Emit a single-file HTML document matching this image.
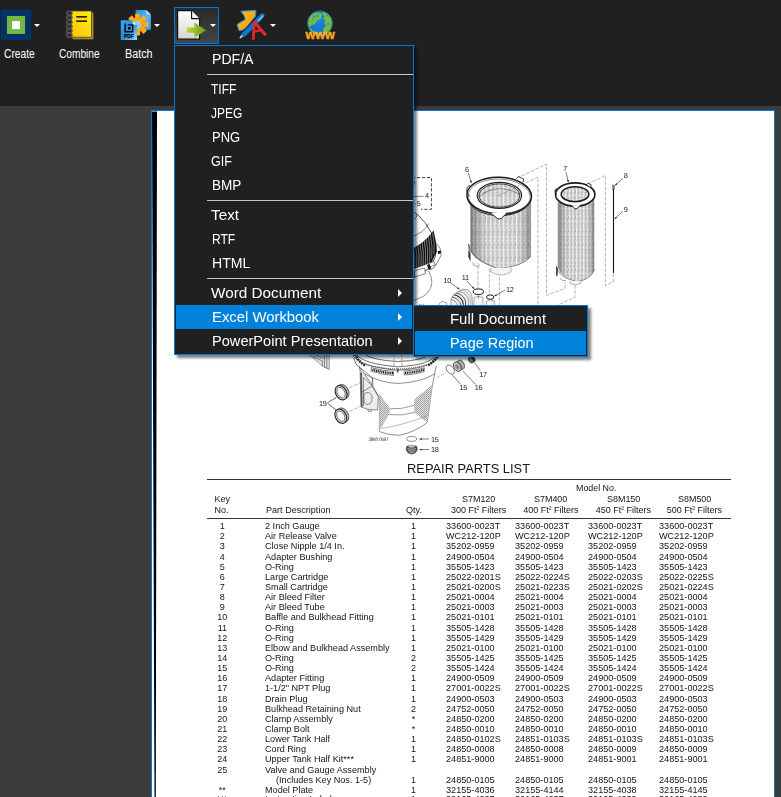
<!DOCTYPE html>
<html><head><meta charset="utf-8"><title>ui</title><style>
html,body{margin:0;padding:0;}
body{width:781px;height:797px;overflow:hidden;background:#3c3c3c;font-family:"Liberation Sans",sans-serif;position:relative;}
.abs{position:absolute;}
#toolbar{position:absolute;left:0;top:0;width:781px;height:106px;background:#202020;}
.tlabel{position:absolute;top:47px;font-size:12px;line-height:14px;color:#fff;white-space:nowrap;transform-origin:0 0;}
.dd{position:absolute;width:0;height:0;border-left:3px solid transparent;border-right:3px solid transparent;border-top:3.5px solid #fff;}
#btn4{position:absolute;left:174px;top:7px;width:43px;height:35px;border:1px solid #0078d7;background:linear-gradient(#2a2a2a,#454545);}
#page{position:absolute;left:151px;top:110px;width:622px;height:700px;border:1px solid #0078d7;background:#fff;overflow:hidden;}
#pg{position:absolute;left:-152px;top:-111px;width:781px;height:797px;will-change:transform;}
#menu{position:absolute;left:174px;top:45px;width:238px;height:308px;border:1px solid #0078d7;background:#202020;box-shadow:3px 3px 2.5px rgba(0,0,0,.5);}
#sub{position:absolute;left:413px;top:305px;width:173px;height:50px;border:1px solid #0078d7;background:#202020;box-shadow:3px 3px 2.5px rgba(0,0,0,.5);}
.mi{position:absolute;left:1px;width:236px;height:24px;color:#fff;font-size:15px;line-height:23px;white-space:nowrap;}
.mi span{position:absolute;left:36px;top:0;transform-origin:0 50%;display:inline-block;}
.mi.hl{background:#0082da;}
.sep{position:absolute;left:32px;width:206px;height:1px;background:#c6c6c6;}
.arr{position:absolute;left:222px;top:8px;width:0;height:0;border-top:4px solid transparent;border-bottom:4px solid transparent;border-left:4.5px solid #fff;}
.t{position:absolute;font-size:9px;line-height:10px;color:#151515;white-space:nowrap;}
.tc{text-align:center;}
</style></head><body>
<div id="toolbar">
<div class="abs" style="left:1px;top:10px;width:30px;height:30px;background:#003366"></div>
<div class="abs" style="left:7px;top:16px;width:18px;height:18px;background:#76b83f"></div>
<div class="abs" style="left:12px;top:21px;width:8px;height:8px;background:#fff"></div>
<div class="dd" style="left:34px;top:24px"></div>
<div class="dd" style="left:154px;top:24px"></div>
<div class="dd" style="left:270px;top:24px"></div>
<div class="tlabel" style="left:3.7px;transform:scaleX(0.852)">Create</div>
<div class="tlabel" style="left:58.8px;transform:scaleX(0.845)">Combine</div>
<div class="tlabel" style="left:125.2px;transform:scaleX(0.899)">Batch</div>
<div id="btn4"></div>
<div class="dd" style="left:209.5px;top:24px"></div>
<svg class="abs" style="left:0;top:0" width="400" height="46" viewBox="0 0 400 46">
<defs>
<linearGradient id="gy" x1="1" y1="0" x2="0" y2="1"><stop offset="0" stop-color="#fff200"/><stop offset="1" stop-color="#fdc20e"/></linearGradient>
<linearGradient id="gb" x1="0" y1="0" x2="1" y2="1"><stop offset="0" stop-color="#1e8fe6"/><stop offset=".6" stop-color="#5bb8f5"/><stop offset="1" stop-color="#2f9be8"/></linearGradient>
<linearGradient id="gb2" x1="0" y1="0" x2="1" y2="1"><stop offset="0" stop-color="#3aa5ee"/><stop offset=".5" stop-color="#2b8fdd"/><stop offset="1" stop-color="#9fd8fb"/></linearGradient>
<linearGradient id="go" x1="0" y1="0" x2="1" y2="1"><stop offset="0" stop-color="#ffc20e"/><stop offset="1" stop-color="#f7941d"/></linearGradient>
<linearGradient id="gd" x1="0" y1="0" x2="0" y2="1"><stop offset="0" stop-color="#fff"/><stop offset="1" stop-color="#d6d6d6"/></linearGradient>
<linearGradient id="gg" x1="0" y1="0" x2="1" y2="0"><stop offset="0" stop-color="#c1d82f"/><stop offset="1" stop-color="#5e9a2e"/></linearGradient>
<radialGradient id="gl" cx=".4" cy=".35" r=".7"><stop offset="0" stop-color="#1b8be0"/><stop offset="1" stop-color="#0a6ac8"/></radialGradient>
<linearGradient id="gw" x1="0" y1="0" x2="0" y2="1"><stop offset="0" stop-color="#ffd21f"/><stop offset="1" stop-color="#f7941d"/></linearGradient>
</defs>
<!-- notebook -->
<g>
 <path d="M73,12.2 H92.6 L93.4,13 V38.6 L92.6,39.2 H73.4 L71.2,37.4 V12.6 Z" fill="#c9961a" stroke="#4a4a4a" stroke-width=".8"/>
 <rect x="71.3" y="11" width="20.2" height="26.2" fill="url(#gy)" stroke="#4a4a4a" stroke-width=".9"/>
 <rect x="76.2" y="16.1" width="10.8" height="1.5" fill="#111"/><rect x="76.2" y="20.4" width="10.8" height="1.5" fill="#111"/>
 <g fill="#2b2b2b" stroke="#585858" stroke-width="1.2">
  <ellipse cx="69.3" cy="13.2" rx="2.8" ry="2"/><ellipse cx="69.3" cy="17.6" rx="2.8" ry="2"/><ellipse cx="69.3" cy="22" rx="2.8" ry="2"/><ellipse cx="69.3" cy="26.4" rx="2.8" ry="2"/><ellipse cx="69.3" cy="30.8" rx="2.8" ry="2"/><ellipse cx="69.3" cy="35.2" rx="2.8" ry="2"/>
 </g>
</g>
<!-- batch -->
<g>
 <path d="M135.6,10 H146.4 L150.9,14.6 V29.8 H135.6 Z" fill="url(#gb)"/>
 <path d="M146.4,10 L150.9,14.6 H146.4 Z" fill="#a7dcfb"/>
 <g fill="url(#go)">
  <circle cx="137.6" cy="24.6" r="7.3"/>
  <rect x="135.2" y="13.8" width="4.8" height="6" transform="rotate(0 137.6 24.6)"/>
  <rect x="135.2" y="13.8" width="4.8" height="6" transform="rotate(45 137.6 24.6)"/>
  <rect x="135.2" y="13.8" width="4.8" height="6" transform="rotate(90 137.6 24.6)"/>
  <rect x="135.2" y="13.8" width="4.8" height="6" transform="rotate(135 137.6 24.6)"/>
  <rect x="135.2" y="13.8" width="4.8" height="6" transform="rotate(180 137.6 24.6)"/>
  <rect x="135.2" y="13.8" width="4.8" height="6" transform="rotate(-45 137.6 24.6)"/>
  <rect x="135.2" y="13.8" width="4.8" height="6" transform="rotate(-90 137.6 24.6)"/>
  <rect x="135.2" y="13.8" width="4.8" height="6" transform="rotate(-135 137.6 24.6)"/>
 </g>
 <circle cx="137.4" cy="24.8" r="3.6" fill="#8fd0f8"/>
 <path d="M120.8,20.2 H132.6 L137.1,24.8 V40 H120.8 Z" fill="url(#gb2)"/>
 <path d="M132.6,20.2 L137.1,24.8 H132.6 Z" fill="#bfe6fc"/>
 <path d="M124.4,23.6 H126 V31 H132 V25.6 H127.6 V24.2 H133.4 V32.4 H124.4 Z" fill="#0b0b0b"/>
 <rect x="128" y="27" width="2.6" height="2.6" fill="#0b0b0b"/>
 <text x="124" y="38.4" font-family="Liberation Sans, sans-serif" font-weight="bold" font-size="5.8" fill="#000" stroke="#000" stroke-width=".25" textLength="9.8" lengthAdjust="spacingAndGlyphs">PDF</text>
</g>
<!-- export doc + arrow -->
<g>
 <path d="M177.6,10.6 H191.6 L199.6,18.6 V39 H177.6 Z" fill="url(#gd)" stroke="#0a0a0a" stroke-width="1.2" stroke-linejoin="round"/>
 <path d="M191.6,10.6 V18.6 H199.6" fill="#f4f4f4" stroke="#0a0a0a" stroke-width="1.1" stroke-linejoin="round"/>
 <path d="M186.8,27.6 H194.4 V22.6 L206.2,30.2 L194.4,37.8 V32.8 H186.8 Z" fill="url(#gg)"/>
</g>
<!-- star/pen/A -->
<g>
 <path d="M240.9,11.3 L255.9,10.3 L255.6,16 L246,27.5 L242.8,30 L239,30.700 L237,24.400 L245.4,19.300 L243.7,15 Z" fill="url(#go)" stroke="#1b8fe3" stroke-width="1" stroke-linejoin="round"/>
 <path d="M262.2,15.6 L244.400,34.200" stroke="#0e76d0" stroke-width="4.6" stroke-linecap="round"/>
 <path d="M243.200,31.400 L246.400,34.800 L240.300,38.600 L239.300,37.600 Z" fill="#0e76d0"/>
 <path d="M241.600,35 L243,36.600 L240.200,38.500 L239.500,37.700 Z" fill="#b7dcf7"/>
 <path d="M258.400,20.600 L263,15.800" stroke="#a9d6f7" stroke-width="1.200" stroke-linecap="round"/>
 <path d="M251.900,39.900 L252.700,21.800 L255.600,21 L267.200,34.400 L264.600,36.200 L260.400,31.400 L255,32.800 L254.800,39.600 Z M255.200,30.300 L258.800,29.400 L255.400,25.400 Z" fill="#e0262e" fill-rule="evenodd"/>
</g>
<!-- globe + www -->
<g>
<g transform="translate(0 .7)">
 <circle cx="320" cy="22.600" r="12.500" fill="url(#gl)"/>
 <clipPath id="gc"><circle cx="320" cy="22.600" r="12.300"/></clipPath>
 <g clip-path="url(#gc)" fill="#74b943">
  <path d="M306,14 L313,11.500 L321.500,12.200 L321.800,15 L320.600,18.500 L317.600,19.200 L316.400,21.400 L314.500,23.400 L311.800,24.200 L310.600,26 L307,26 Z"/>
  <path d="M322.600,11 L328,12 L331.500,15 L334,22 L332.500,30 L329,34.500 L324,35 L322.800,31 L323.400,27.500 L326,25 L324.200,22.500 L325.200,19.800 L323.200,18 L324.600,15.600 L322.400,14 Z"/>
  <path d="M307,26.800 L310.800,27.800 L313.200,30.400 L316.800,31.800 L320.800,33.400 L321.600,36 L312,35.500 L307,31 Z"/>
 </g>
 <g clip-path="url(#gc)" fill="#1b84dc"><rect x="313.200" y="14.800" width="1.800" height="1.500"/><rect x="316.800" y="13.600" width="1.400" height="2.400"/><rect x="326.400" y="14" width="1.600" height="1.400"/><rect x="327" y="22.800" width="2.600" height="1"/><rect x="312" y="17.600" width="1.600" height="1"/></g>
 <circle cx="320" cy="22.600" r="12.400" fill="none" stroke="#0b66c2" stroke-width=".7"/>
</g>
 <text x="305.600" y="38.900" font-family="Liberation Sans, sans-serif" font-weight="bold" font-size="12.600" fill="url(#gw)" stroke="#f7a71b" stroke-width=".4" textLength="29.200" lengthAdjust="spacingAndGlyphs">www</text>
</g>
</svg>

</div>
<div id="page"><div id="pg">
<svg class="abs" style="left:0;top:0" width="781" height="797" viewBox="0 0 781 797" font-family="Liberation Sans, sans-serif" font-size="7.3" fill="#222" text-rendering="geometricPrecision" letter-spacing="-0.35">
<defs>
<pattern id="pl" width="4.3" height="13" patternUnits="userSpaceOnUse"><rect width="4.3" height="13" fill="#d0d0d0"/><rect x="0.00" y="0" width="0.77" height="1.05" fill="#f9f9f9"/><rect x="0.00" y="1" width="0.77" height="1.05" fill="#f4f4f4"/><rect x="0.00" y="2" width="0.77" height="1.05" fill="#fbfbfb"/><rect x="0.00" y="3" width="0.77" height="1.05" fill="#f5f5f5"/><rect x="0.00" y="4" width="0.77" height="1.05" fill="#fcfcfc"/><rect x="0.00" y="5" width="0.77" height="1.05" fill="#fbfbfb"/><rect x="0.00" y="6" width="0.77" height="1.05" fill="#fdfdfd"/><rect x="0.00" y="7" width="0.77" height="1.05" fill="#fbfbfb"/><rect x="0.00" y="8" width="0.77" height="1.05" fill="#fafafa"/><rect x="0.00" y="9" width="0.77" height="1.05" fill="#f8f8f8"/><rect x="0.00" y="10" width="0.77" height="1.05" fill="#f0f0f0"/><rect x="0.00" y="11" width="0.77" height="1.05" fill="#fdfdfd"/><rect x="0.00" y="12" width="0.77" height="1.05" fill="#f7f7f7"/><rect x="0.72" y="0" width="0.77" height="1.05" fill="#e5e5e5"/><rect x="0.72" y="1" width="0.77" height="1.05" fill="#f2f2f2"/><rect x="0.72" y="2" width="0.77" height="1.05" fill="#dfdfdf"/><rect x="0.72" y="3" width="0.77" height="1.05" fill="#e3e3e3"/><rect x="0.72" y="4" width="0.77" height="1.05" fill="#e1e1e1"/><rect x="0.72" y="5" width="0.77" height="1.05" fill="#e9e9e9"/><rect x="0.72" y="6" width="0.77" height="1.05" fill="#ededed"/><rect x="0.72" y="7" width="0.77" height="1.05" fill="#e5e5e5"/><rect x="0.72" y="8" width="0.77" height="1.05" fill="#eaeaea"/><rect x="0.72" y="9" width="0.77" height="1.05" fill="#efefef"/><rect x="0.72" y="10" width="0.77" height="1.05" fill="#e1e1e1"/><rect x="0.72" y="11" width="0.77" height="1.05" fill="#f0f0f0"/><rect x="0.72" y="12" width="0.77" height="1.05" fill="#e5e5e5"/><rect x="1.43" y="0" width="0.77" height="1.05" fill="#a9a9a9"/><rect x="1.43" y="1" width="0.77" height="1.05" fill="#c3c3c3"/><rect x="1.43" y="2" width="0.77" height="1.05" fill="#dcdcdc"/><rect x="1.43" y="3" width="0.77" height="1.05" fill="#cbcbcb"/><rect x="1.43" y="4" width="0.77" height="1.05" fill="#bfbfbf"/><rect x="1.43" y="5" width="0.77" height="1.05" fill="#d9d9d9"/><rect x="1.43" y="6" width="0.77" height="1.05" fill="#bcbcbc"/><rect x="1.43" y="7" width="0.77" height="1.05" fill="#b1b1b1"/><rect x="1.43" y="8" width="0.77" height="1.05" fill="#b9b9b9"/><rect x="1.43" y="9" width="0.77" height="1.05" fill="#e0e0e0"/><rect x="1.43" y="10" width="0.77" height="1.05" fill="#b8b8b8"/><rect x="1.43" y="11" width="0.77" height="1.05" fill="#b8b8b8"/><rect x="1.43" y="12" width="0.77" height="1.05" fill="#a8a8a8"/><rect x="2.15" y="0" width="0.77" height="1.05" fill="#a8a8a8"/><rect x="2.15" y="1" width="0.77" height="1.05" fill="#c2c2c2"/><rect x="2.15" y="2" width="0.77" height="1.05" fill="#c3c3c3"/><rect x="2.15" y="3" width="0.77" height="1.05" fill="#bdbdbd"/><rect x="2.15" y="4" width="0.77" height="1.05" fill="#bdbdbd"/><rect x="2.15" y="5" width="0.77" height="1.05" fill="#cdcdcd"/><rect x="2.15" y="6" width="0.77" height="1.05" fill="#d0d0d0"/><rect x="2.15" y="7" width="0.77" height="1.05" fill="#c1c1c1"/><rect x="2.15" y="8" width="0.77" height="1.05" fill="#ededed"/><rect x="2.15" y="9" width="0.77" height="1.05" fill="#c2c2c2"/><rect x="2.15" y="10" width="0.77" height="1.05" fill="#bfbfbf"/><rect x="2.15" y="11" width="0.77" height="1.05" fill="#c1c1c1"/><rect x="2.15" y="12" width="0.77" height="1.05" fill="#d9d9d9"/><rect x="2.87" y="0" width="0.77" height="1.05" fill="#cecece"/><rect x="2.87" y="1" width="0.77" height="1.05" fill="#aaaaaa"/><rect x="2.87" y="2" width="0.77" height="1.05" fill="#d6d6d6"/><rect x="2.87" y="3" width="0.77" height="1.05" fill="#dddddd"/><rect x="2.87" y="4" width="0.77" height="1.05" fill="#bdbdbd"/><rect x="2.87" y="5" width="0.77" height="1.05" fill="#bababa"/><rect x="2.87" y="6" width="0.77" height="1.05" fill="#c9c9c9"/><rect x="2.87" y="7" width="0.77" height="1.05" fill="#b0b0b0"/><rect x="2.87" y="8" width="0.77" height="1.05" fill="#d2d2d2"/><rect x="2.87" y="9" width="0.77" height="1.05" fill="#cecece"/><rect x="2.87" y="10" width="0.77" height="1.05" fill="#a8a8a8"/><rect x="2.87" y="11" width="0.77" height="1.05" fill="#d3d3d3"/><rect x="2.87" y="12" width="0.77" height="1.05" fill="#b0b0b0"/><rect x="3.58" y="0" width="0.77" height="1.05" fill="#cfcfcf"/><rect x="3.58" y="1" width="0.77" height="1.05" fill="#d5d5d5"/><rect x="3.58" y="2" width="0.77" height="1.05" fill="#cfcfcf"/><rect x="3.58" y="3" width="0.77" height="1.05" fill="#e5e5e5"/><rect x="3.58" y="4" width="0.77" height="1.05" fill="#d0d0d0"/><rect x="3.58" y="5" width="0.77" height="1.05" fill="#bfbfbf"/><rect x="3.58" y="6" width="0.77" height="1.05" fill="#e5e5e5"/><rect x="3.58" y="7" width="0.77" height="1.05" fill="#e4e4e4"/><rect x="3.58" y="8" width="0.77" height="1.05" fill="#bebebe"/><rect x="3.58" y="9" width="0.77" height="1.05" fill="#afafaf"/><rect x="3.58" y="10" width="0.77" height="1.05" fill="#c8c8c8"/><rect x="3.58" y="11" width="0.77" height="1.05" fill="#aaaaaa"/><rect x="3.58" y="12" width="0.77" height="1.05" fill="#d5d5d5"/></pattern>
<pattern id="pl2" width="3.6" height="13" patternUnits="userSpaceOnUse"><rect width="3.6" height="13" fill="#d0d0d0"/><rect x="0.00" y="0" width="0.77" height="1.05" fill="#fdfdfd"/><rect x="0.00" y="1" width="0.77" height="1.05" fill="#f6f6f6"/><rect x="0.00" y="2" width="0.77" height="1.05" fill="#f0f0f0"/><rect x="0.00" y="3" width="0.77" height="1.05" fill="#f8f8f8"/><rect x="0.00" y="4" width="0.77" height="1.05" fill="#fcfcfc"/><rect x="0.00" y="5" width="0.77" height="1.05" fill="#f6f6f6"/><rect x="0.00" y="6" width="0.77" height="1.05" fill="#f5f5f5"/><rect x="0.00" y="7" width="0.77" height="1.05" fill="#f6f6f6"/><rect x="0.00" y="8" width="0.77" height="1.05" fill="#f9f9f9"/><rect x="0.00" y="9" width="0.77" height="1.05" fill="#fdfdfd"/><rect x="0.00" y="10" width="0.77" height="1.05" fill="#f0f0f0"/><rect x="0.00" y="11" width="0.77" height="1.05" fill="#f7f7f7"/><rect x="0.00" y="12" width="0.77" height="1.05" fill="#f0f0f0"/><rect x="0.72" y="0" width="0.77" height="1.05" fill="#f4f4f4"/><rect x="0.72" y="1" width="0.77" height="1.05" fill="#e3e3e3"/><rect x="0.72" y="2" width="0.77" height="1.05" fill="#f1f1f1"/><rect x="0.72" y="3" width="0.77" height="1.05" fill="#e4e4e4"/><rect x="0.72" y="4" width="0.77" height="1.05" fill="#e1e1e1"/><rect x="0.72" y="5" width="0.77" height="1.05" fill="#e5e5e5"/><rect x="0.72" y="6" width="0.77" height="1.05" fill="#ececec"/><rect x="0.72" y="7" width="0.77" height="1.05" fill="#e9e9e9"/><rect x="0.72" y="8" width="0.77" height="1.05" fill="#eeeeee"/><rect x="0.72" y="9" width="0.77" height="1.05" fill="#e9e9e9"/><rect x="0.72" y="10" width="0.77" height="1.05" fill="#eeeeee"/><rect x="0.72" y="11" width="0.77" height="1.05" fill="#e6e6e6"/><rect x="0.72" y="12" width="0.77" height="1.05" fill="#ececec"/><rect x="1.44" y="0" width="0.77" height="1.05" fill="#adadad"/><rect x="1.44" y="1" width="0.77" height="1.05" fill="#cfcfcf"/><rect x="1.44" y="2" width="0.77" height="1.05" fill="#c5c5c5"/><rect x="1.44" y="3" width="0.77" height="1.05" fill="#a4a4a4"/><rect x="1.44" y="4" width="0.77" height="1.05" fill="#d7d7d7"/><rect x="1.44" y="5" width="0.77" height="1.05" fill="#ababab"/><rect x="1.44" y="6" width="0.77" height="1.05" fill="#bababa"/><rect x="1.44" y="7" width="0.77" height="1.05" fill="#cbcbcb"/><rect x="1.44" y="8" width="0.77" height="1.05" fill="#e1e1e1"/><rect x="1.44" y="9" width="0.77" height="1.05" fill="#cecece"/><rect x="1.44" y="10" width="0.77" height="1.05" fill="#b2b2b2"/><rect x="1.44" y="11" width="0.77" height="1.05" fill="#cbcbcb"/><rect x="1.44" y="12" width="0.77" height="1.05" fill="#c3c3c3"/><rect x="2.16" y="0" width="0.77" height="1.05" fill="#e5e5e5"/><rect x="2.16" y="1" width="0.77" height="1.05" fill="#ababab"/><rect x="2.16" y="2" width="0.77" height="1.05" fill="#c7c7c7"/><rect x="2.16" y="3" width="0.77" height="1.05" fill="#c8c8c8"/><rect x="2.16" y="4" width="0.77" height="1.05" fill="#c7c7c7"/><rect x="2.16" y="5" width="0.77" height="1.05" fill="#b6b6b6"/><rect x="2.16" y="6" width="0.77" height="1.05" fill="#aaaaaa"/><rect x="2.16" y="7" width="0.77" height="1.05" fill="#b3b3b3"/><rect x="2.16" y="8" width="0.77" height="1.05" fill="#c7c7c7"/><rect x="2.16" y="9" width="0.77" height="1.05" fill="#dddddd"/><rect x="2.16" y="10" width="0.77" height="1.05" fill="#b4b4b4"/><rect x="2.16" y="11" width="0.77" height="1.05" fill="#a6a6a6"/><rect x="2.16" y="12" width="0.77" height="1.05" fill="#aaaaaa"/><rect x="2.88" y="0" width="0.77" height="1.05" fill="#e4e4e4"/><rect x="2.88" y="1" width="0.77" height="1.05" fill="#d3d3d3"/><rect x="2.88" y="2" width="0.77" height="1.05" fill="#a4a4a4"/><rect x="2.88" y="3" width="0.77" height="1.05" fill="#bebebe"/><rect x="2.88" y="4" width="0.77" height="1.05" fill="#cccccc"/><rect x="2.88" y="5" width="0.77" height="1.05" fill="#c0c0c0"/><rect x="2.88" y="6" width="0.77" height="1.05" fill="#dadada"/><rect x="2.88" y="7" width="0.77" height="1.05" fill="#d5d5d5"/><rect x="2.88" y="8" width="0.77" height="1.05" fill="#b2b2b2"/><rect x="2.88" y="9" width="0.77" height="1.05" fill="#a7a7a7"/><rect x="2.88" y="10" width="0.77" height="1.05" fill="#a4a4a4"/><rect x="2.88" y="11" width="0.77" height="1.05" fill="#dfdfdf"/><rect x="2.88" y="12" width="0.77" height="1.05" fill="#cacaca"/></pattern>
<pattern id="st" width="2" height="2" patternUnits="userSpaceOnUse"><rect width="2" height="2" fill="#dedede"/><rect width="1" height="1" fill="#9c9c9c"/><rect x="1" y="1" width="1" height="1" fill="#adadad"/></pattern>
<linearGradient id="edge" x1="0" x2="1" y1="0" y2="0"><stop offset="0" stop-color="#000" stop-opacity=".4"/><stop offset=".1" stop-color="#000" stop-opacity=".22"/><stop offset=".22" stop-color="#000" stop-opacity=".04"/><stop offset=".35" stop-color="#000" stop-opacity="0"/><stop offset=".78" stop-color="#000" stop-opacity="0"/><stop offset=".9" stop-color="#000" stop-opacity=".14"/><stop offset="1" stop-color="#000" stop-opacity=".36"/></linearGradient>
<marker id="ah" viewBox="0 0 6 6" refX="5.5" refY="3" markerWidth="4" markerHeight="4" orient="auto"><path d="M0,0.6 L6,3 L0,5.4 z" fill="#222"/></marker>
</defs>
<!-- left black scan stripe -->
<polygon points="152,111.5 157,111.5 155.8,797 154.5,797" fill="#000"/>
<g stroke="#6a6a6a" stroke-width=".5" fill="none" stroke-dasharray="3.6 1.5">
 <!-- dashed explode lines -->
 <path d="M517,178 L546.5,164 V295.3 L565.1,288.3 V282"/>
 <path d="M498,196 L538,177 V306"/>
 <path d="M588,184 L605.4,175.5 V285.7 L613.4,281.5 V273"/>
 <path d="M575,285 V297.2 L558,305"/>
 <path d="M477.9,266 V288"/><path d="M489.4,269 V294"/><path d="M499.4,277 V306"/>
</g>
<!-- dashed box 2/4/5 -->
<path d="M412,177.6 H431.4 V209.3 H421" fill="none" stroke="#222" stroke-width=".9" stroke-dasharray="3.2 1.8"/>
<text x="411.600" y="185.500">2</text><text x="425" y="198">4</text><text x="416.700" y="206">5</text>
<path d="M414,196.4 H423.5 M414.3,203.8 H415.6" stroke="#333" stroke-width=".6"/>
<!-- ===== large cartridge 6 ===== -->
<g>
 <path d="M470.4,198 L470.4,250 Q474,262 497,268.3 Q520,266 530.9,256.5 L530.9,198 Z" fill="url(#pl)"/>
 <path d="M470.4,198 L470.4,250 Q474,262 497,268.3 Q520,266 530.9,256.5 L530.9,198 Z" fill="url(#edge)"/>
 <path d="M468.6,244 Q469,258 497,268.6 Q522,267 530.9,256.5" fill="none" stroke="#555" stroke-width=".8"/>
 <path d="M468.3,250 L468.300,257 L470.500,261.500 L470.500,254 Z" fill="#333"/><path d="M468.600,244 Q468.500,250 470.400,253" fill="none" stroke="#444" stroke-width=".7"/>
 <path d="M491,268 V272 Q501,278 511,272 V267.5" fill="#f4f4f4" stroke="#888" stroke-width=".6"/>
 <path d="M473,262 v3 q3,2 6,1.5 v-3" fill="#eee" stroke="#777" stroke-width=".5"/>
 <!-- top ring -->
 <path d="M467,197 Q470,213 499,216.200 Q528,214 531.500,197.500" fill="#fff" stroke="#222" stroke-width="1"/><ellipse cx="499.2" cy="195.7" rx="32.3" ry="18.4" fill="#fff" stroke="#1a1a1a" stroke-width="1.500" transform="rotate(2 499 196)"/>
 <ellipse cx="499.2" cy="196.3" rx="31" ry="17.2" fill="none" stroke="#444" stroke-width=".6" transform="rotate(2 499 196)"/>
 <path d="M470,185.5 q-4,1 -3,6 q.5,3.5 3,5" fill="none" stroke="#222" stroke-width=".9"/>
 <path d="M516.5,178.5 l1.8,-2 l5.6,2.8 l-1,3" fill="#fff" stroke="#222" stroke-width=".9"/>
 <path d="M490.5,213 l7,5.6 q2,.8 4,-.4 l5.5,-5.4" fill="#fff" stroke="#222" stroke-width="1"/>
 <ellipse cx="499.4" cy="195.4" rx="22.2" ry="13" fill="url(#pl)" stroke="#222" stroke-width="1.1"/>
 <ellipse cx="499.4" cy="195.6" rx="20.3" ry="11.6" fill="none" stroke="#222" stroke-width=".8"/>
 <path d="M478,197 q21,-16 43,-2" fill="none" stroke="#444" stroke-width=".5"/>
</g>
<g stroke="#6a6a6a" stroke-width=".5" fill="none" stroke-dasharray="3.6 1.5"><path d="M498,196 L521,185"/><path d="M483,193 L497,186.5"/></g>
<text x="465" y="172">6</text><path d="M468.2,172.6 L471.3,182.8" stroke="#222" stroke-width=".6" marker-end="url(#ah)"/>
<!-- ===== small cartridge 7 ===== -->
<g>
 <path d="M557.8,196 V267 Q560,277 577,281.4 Q590,279 594.3,269.7 V196 Z" fill="url(#pl2)"/>
 <path d="M557.8,196 V267 Q560,277 577,281.4 Q590,279 594.3,269.7 V196 Z" fill="url(#edge)"/>
 <path d="M556.4,266 Q557,277 577,281.6 Q591,279.5 594.5,269.7" fill="none" stroke="#555" stroke-width=".7"/>
 <path d="M556.1,266.5 v10 l1.6,-1.5 v-7 z" fill="#333"/>
 <path d="M560,278.5 q3,3.5 6,1.8" fill="none" stroke="#666" stroke-width=".6"/>
 <path d="M570,281 v2 q5.5,3.5 11,0 v-2.3" fill="#f4f4f4" stroke="#888" stroke-width=".6"/>
 <ellipse cx="575.2" cy="194.5" rx="19.7" ry="11.6" fill="#fff" stroke="#1a1a1a" stroke-width="1.6"/>
 <path d="M556.6,188.5 q-2.2,.5 -1.6,3.5 q.3,2 1.8,3" fill="none" stroke="#222" stroke-width=".9"/>
 <path d="M586.8,184.6 l1,-1.4 l3.4,1.6 l-.6,2.2" fill="#fff" stroke="#222" stroke-width=".8"/>
 <path d="M571.2,205.2 l3.6,3.5 q1.2,.5 2.4,-.2 l3.3,-3.4" fill="#fff" stroke="#222" stroke-width="1"/>
 <ellipse cx="575" cy="194.2" rx="13.8" ry="7.5" fill="url(#pl2)" stroke="#1a1a1a" stroke-width="1.5"/>
</g>
<text x="563.2" y="171.2">7</text><path d="M566,172.2 L568.4,182.3" stroke="#222" stroke-width=".6" marker-end="url(#ah)"/>
<!-- tube 8/9 -->
<rect x="612.5" y="185" width="2" height="4.2" fill="#888" stroke="#444" stroke-width=".4"/>
<path d="M613.500,189 V273" stroke="#111" stroke-width="1.100"/>
<text x="623.8" y="178.2">8</text><path d="M623,178.4 L615.2,185.2" stroke="#222" stroke-width=".6" marker-end="url(#ah)"/>
<text x="623.8" y="212">9</text><path d="M623,211.2 L614.8,218.8" stroke="#222" stroke-width=".6" marker-end="url(#ah)"/>
<!-- ===== tank dome (left, partially hidden by menu) ===== -->
<g>
 <path d="M410,209 Q428,220 436,244 Q438,258 428,269 L410,280 Z" fill="#fff" stroke="#222" stroke-width=".8"/>
 <path d="M410,217 Q416,222 417,214.500" fill="none" stroke="#333" stroke-width=".6"/>
 <path d="M410,237.500 Q424,233 428.600,223.500" fill="none" stroke="#333" stroke-width=".6"/>
 <!-- ribbed black region -->
 <path d="M410,249.500 Q425,243 433.500,230.500 Q436.800,242 436.400,252 L431.500,262.500 L410,270.500 Z" fill="#0c0c0c"/>
 <g stroke="#f2f2f2" stroke-width=".5" fill="none">
  <path d="M411.0,248.9 Q413.6,259.1 412.4,269.4"/><path d="M413.1,246.8 Q415.8,257.6 414.5,268.7"/><path d="M415.3,244.7 Q417.9,256.2 416.7,267.9"/><path d="M417.4,242.7 Q420.0,254.8 418.8,267.1"/><path d="M419.6,240.9 Q422.2,253.5 421.0,266.4"/><path d="M421.7,239.2 Q424.3,252.3 423.1,265.6"/><path d="M423.9,237.6 Q426.5,251.1 425.3,264.8"/><path d="M426.0,236.2 Q428.6,250.0 427.4,264.1"/><path d="M428.2,234.9 Q430.8,249.0 429.6,263.3"/><path d="M430.3,233.8 Q432.9,246.3 431.7,259.1"/><path d="M432.5,232.6 Q435.1,243.4 433.9,254.4"/>
 </g>
 <!-- clamp ring -->
 <path d="M436.200,243.500 Q441.500,248 441,255.500 L435,266.500 L430.700,270" fill="none" stroke="#333" stroke-width=".6"/>
 <path d="M428.5,263.5 l5.5,-2 l1.2,3.4 l-5.5,2.2 z" fill="#fff" stroke="#333" stroke-width=".6"/>
 <path d="M437.5,251.5 l3,-1 l.6,2.4 l-2.6,1.4 z" fill="#111"/>
 <path d="M427,265 l2.6,-1 l1.6,5 l-2.4,1 z" fill="#111"/>
 <path d="M410,272 L424.5,268 L425.5,273.5 L410,278.5" fill="#fff" stroke="#333" stroke-width=".6"/>
 <path d="M414,271 v6" stroke="#111" stroke-width="1.2"/>
 <!-- lower tank outline arc -->
 <path d="M428.5,270.5 Q436,284 427,293.5 Q421,299 410,301" fill="none" stroke="#444" stroke-width=".6"/>
</g>
<!-- ===== parts 10,11,12 ===== -->
<text x="443.5" y="283">10</text><path d="M450.8,283 L459.4,289.2" stroke="#222" stroke-width=".6" marker-end="url(#ah)"/>
<text x="461.800" y="279.600">11</text><path d="M466.6,280.6 L474.2,288.8" stroke="#222" stroke-width=".6" marker-end="url(#ah)"/>
<text x="506" y="292.3">12</text><path d="M505.2,290 L494.6,296" stroke="#222" stroke-width=".6" marker-end="url(#ah)"/>
<ellipse cx="478.4" cy="291.7" rx="5.1" ry="2.8" fill="#fff" stroke="#111" stroke-width="1"/>
<ellipse cx="490.2" cy="297.1" rx="3.7" ry="2.2" fill="#fff" stroke="#111" stroke-width="1"/>
<path d="M474,297.5 q4.5,-2.4 9,0 V306 H474 Z" fill="#f6f6f6" stroke="#777" stroke-width=".6"/>
<path d="M486.3,301 q4,-2 8,0 V306 H486.3 Z" fill="#f6f6f6" stroke="#777" stroke-width=".6"/>
<path d="M478.4,294.5 v4" stroke="#555" stroke-width=".6"/>
<!-- fitting 10 -->
<g>
 <path d="M451,306 L451,299 Q453,294 458.500,291.500 Q463,287.800 467,289.600 Q471.600,292 472,297 L472.400,306 Z" fill="#f2f2f2" stroke="#666" stroke-width=".6"/>
 <path d="M458.600,291.300 Q464.500,292 467.800,297.500 Q469,301 468.600,306" fill="none" stroke="#555" stroke-width=".6"/>
 <path d="M461,289.800 Q467,291 470,296.500 Q471,300 470.800,306" fill="none" stroke="#777" stroke-width=".5"/>
 <path d="M456.200,293 Q462,294 465,299.500 Q466,303 465.600,306" fill="none" stroke="#333" stroke-width=".9"/>
 <path d="M454,294.800 Q459.600,295.800 462.600,301 Q463.400,303.500 463.200,306" fill="none" stroke="#222" stroke-width="1.100"/>
 <path d="M452,296.800 Q457,297.600 460,302.500 Q460.600,304 460.600,306" fill="none" stroke="#333" stroke-width=".8"/>
 <path d="M451.200,299.500 Q455.600,300 457.800,306" fill="none" stroke="#555" stroke-width=".6"/>
 <path d="M438.600,306 Q439.500,301.600 443.500,301.400 Q446.600,302 447,306" fill="none" stroke="#555" stroke-width=".6"/>
</g>
<path d="M419.600,304.400 v2 M421.200,304.400 v2 M423.600,304.400 v2" stroke="#222" stroke-width=".8"/>
<!-- ===== lower region (below menus) ===== -->
<!-- clamp block left -->
<g>
 <path d="M308,354 L322,354 L329.3,355 L329.3,369.5 L322.5,366 Z" fill="#dedede" stroke="#666" stroke-width=".6"/>
 <path d="M313,356.5 L322.5,361 V366 M316,355 L324,358.5 M324.5,355 V368 M326.8,355 V369" stroke="#555" stroke-width=".6" fill="none"/>
</g>
<!-- tank rim -->
<g fill="none" stroke="#333" stroke-width=".7">
 <path d="M352.5,354 Q356,366 397.5,370.3 Q436,368 440.3,354"/>
 <path d="M356.5,354 Q361,363.5 397.5,366.8 Q432,365 436.3,354"/>
 <path d="M364,354 Q372,360 397.5,361.6 Q424,360.5 430,354"/>
 <path d="M353.5,357.5 l2.5,6.5 l4,3.5"/>
</g>
<path d="M355.200,354 Q358,361.500 365.500,365.800" fill="none" stroke="#1a1a1a" stroke-width="2.400" stroke-dasharray="1.800 .9"/>
<path d="M438.200,354 Q435,361.500 427.500,365.600" fill="none" stroke="#1a1a1a" stroke-width="2.400" stroke-dasharray="1.800 .9"/>
<path d="M366,364.600 Q380,368.600 397.500,369 Q415,368.600 427,364.400" fill="none" stroke="#444" stroke-width="1.200" stroke-dasharray=".8 1.100"/>
<!-- toothed segments -->
<g>
 <path d="M371.2,367.5 Q382,371 393.5,371.3 V375.4 Q382,375 371.2,371.2 Z" fill="#fff" stroke="#333" stroke-width=".6"/>
 <path d="M372.500,369.600 Q383,372.800 393,373.200" stroke="#111" stroke-width="2.200" stroke-dasharray="1.100 .7" fill="none"/>
 <path d="M404.2,371 Q415,370.6 424.3,367.8 V371.6 Q415,374.6 404.2,375 Z" fill="#fff" stroke="#333" stroke-width=".6"/>
 <path d="M405,373 Q415,372.400 424,369.600" stroke="#111" stroke-width="2.200" stroke-dasharray="1.100 .7" fill="none"/>
 <path d="M394,354 V366 M401.8,354 V366" stroke="#444" stroke-width=".5" stroke-dasharray="3 1.4"/>
 <path d="M397.8,368.5 v4" stroke="#111" stroke-width="1"/>
</g>
<!-- tank body -->
<g>
 <path d="M359.3,366.5 L361,372 Q380,383 398,383.5 Q420,382.5 434.6,374 L436.2,366" fill="none" stroke="#444" stroke-width=".6"/>
 <path d="M434.6,374 L432.4,385 L427.2,422.6 Q415,432 399.5,435.3 Q388,435.4 379.4,431.6 L379.4,396" fill="none" stroke="#444" stroke-width=".6"/>
 <!-- stippled regions -->
 <path d="M379.4,394 L390.2,408.5 L389.6,414 L380.5,428.5 L379.4,431 Z" fill="url(#st)"/>
 <path d="M432.4,384.5 L414.2,399.5 L414,412.5 L427.2,422.6 Z" fill="url(#st)"/>
 <path d="M390.2,408.8 Q402,409.5 414.2,405.3 M389.6,414.6 Q402,416.3 414,412.5" fill="none" stroke="#555" stroke-width=".6"/>
 <path d="M380.5,428.5 Q400,426 427,416" fill="none" stroke="#777" stroke-width=".5"/>
 <!-- port block -->
 <path d="M360,367.5 L361,407 L368,409.5 L377.5,410 L378.5,396 L372,385 Z" fill="#ececec" stroke="#444" stroke-width=".6"/>
 <path d="M361,368 L372.5,378 L372,385 M363.5,377.5 L372,385.5 M363.5,377.5 V406 M362,392 L372,386 L378,396 M364,394 q5,-4 8,2 q1,5 -2,8 q-4,2 -6,-2 z M372.5,378 L373,386" fill="none" stroke="#444" stroke-width=".6"/>
 <path d="M368,409.5 v1.8 h3.4 v-1.6" fill="none" stroke="#444" stroke-width=".6"/>
 <path d="M360.3,372 L361,407 L362.6,407.5 L362,373 Z" fill="#555"/>
</g>
<!-- nuts 19 -->
<g>
 <g transform="rotate(-28 341.8 392.3)">
  <ellipse cx="343.3" cy="392.3" rx="5.4" ry="7.6" fill="#bbb" stroke="#333" stroke-width=".7"/>
  <ellipse cx="341" cy="392.3" rx="5.4" ry="7.6" fill="#ddd" stroke="#222" stroke-width="1.1"/>
  <ellipse cx="341" cy="392.3" rx="3.6" ry="5.6" fill="#fff" stroke="#333" stroke-width=".6"/>
 </g>
 <g transform="rotate(-28 341.5 415.8)">
  <ellipse cx="343" cy="415.8" rx="5.4" ry="7.6" fill="#bbb" stroke="#333" stroke-width=".7"/>
  <ellipse cx="340.7" cy="415.8" rx="5.4" ry="7.6" fill="#ddd" stroke="#222" stroke-width="1.1"/>
  <ellipse cx="340.7" cy="415.8" rx="3.6" ry="5.6" fill="#fff" stroke="#333" stroke-width=".6"/>
 </g>
 <path d="M349.5,387.8 L360.5,382.6 M349.5,411.5 L360.5,406.2" stroke="#6a6a6a" stroke-width=".5" stroke-dasharray="3.6 1.5"/>
 <text x="319" y="406">19</text>
 <path d="M327.6,402.6 L336.4,397.4 M327.6,403.4 L336.2,410" stroke="#222" stroke-width=".7"/>
</g>
<!-- parts 15/16/17 right -->
<g>
 <path d="M436.5,378 L446,372.5" stroke="#6a6a6a" stroke-width=".5" stroke-dasharray="3.6 1.5"/>
 <ellipse cx="450.4" cy="369.7" rx="3.3" ry="5.2" fill="#fff" stroke="#333" stroke-width=".6" transform="rotate(-38 450.2 369.9)"/>
 <g transform="rotate(-30 459.5 365.5)">
  <ellipse cx="461" cy="365.5" rx="3.4" ry="5" fill="#aaa" stroke="#333" stroke-width=".6"/>
  <rect x="457" y="360.5" width="4" height="10" fill="#8a8a8a"/>
  <ellipse cx="457" cy="365.5" rx="3.4" ry="5" fill="#d0d0d0" stroke="#333" stroke-width=".8"/>
  <ellipse cx="457" cy="365.5" rx="1.8" ry="3" fill="#888"/>
 </g>
 <g transform="rotate(-30 471.8 359.5)">
  <ellipse cx="472.8" cy="359.5" rx="2.2" ry="3.2" fill="#444" stroke="#222" stroke-width=".6"/>
  <ellipse cx="470.8" cy="359.5" rx="2.2" ry="3.2" fill="#777" stroke="#222" stroke-width=".8"/>
 </g>
 <text x="459.6" y="390.4">15</text><text x="474.8" y="390.4">16</text><text x="479.2" y="377.4">17</text>
 <path d="M452.4,375 L460.4,384.2 M462.8,371 L475.6,384.4 M474.4,362.4 L480.2,370.4" stroke="#222" stroke-width=".6"/>
</g>
<!-- bottom 15 / 18 -->
<g>
 <ellipse cx="411.7" cy="438.9" rx="5" ry="2.4" fill="#fff" stroke="#444" stroke-width=".6"/>
 <path d="M429,439 H419.6" stroke="#222" stroke-width=".6" marker-end="url(#ah)"/>
 <path d="M429,449.6 H419.6" stroke="#222" stroke-width=".6" marker-end="url(#ah)"/>
 <text x="431" y="441.6">15</text><text x="431" y="452.2">18</text>
 <path d="M406.6,446.5 q5,-2.4 10.2,0 l.4,3.2 q-1,3.6 -5.5,4.4 q-4.5,-.8 -5.5,-4.4 z" fill="#555" stroke="#222" stroke-width=".6"/>
 <path d="M407.5,448.4 q4.2,2 8.4,0 M408,450.4 q3.7,1.8 7.4,0 M409.4,452.2 q2.3,1 4.6,0" stroke="#ddd" stroke-width=".6" fill="none"/>
 <ellipse cx="411.7" cy="446.4" rx="3.2" ry="1.1" fill="#ccc"/>
</g>
<text x="368.4" y="441.2" font-size="4.9" fill="#333">2860 0597</text>

</svg>

<div class="t" style="left:407.00px;top:461.00px;font-size:13px;line-height:15px;transform-origin:0 0;transform:scaleX(0.990);">REPAIR PARTS LIST</div>
<div class="abs" style="left:207px;top:479px;width:523.5px;height:1px;background:#333"></div>
<div class="abs" style="left:207px;top:517.6px;width:523.5px;height:1px;background:#333"></div>
<div class="t" style="left:575.90px;top:482.68px;font-size:9px;line-height:10px;transform-origin:0 0;transform:scaleX(0.985);">Model No.</div>
<div class="t" style="left:214.60px;top:494.08px;font-size:9px;line-height:10px;transform-origin:0 0;">Key</div>
<div class="t" style="left:214.60px;top:505.08px;font-size:9px;line-height:10px;transform-origin:0 0;">No.</div>
<div class="t" style="left:265.50px;top:505.08px;font-size:9px;line-height:10px;transform-origin:0 0;transform:scaleX(1.007);">Part Description</div>
<div class="t" style="left:405.80px;top:505.08px;font-size:9px;line-height:10px;transform-origin:0 0;transform:scaleX(1.012);">Qty.</div>
<div class="t" style="left:461.95px;top:493.68px;font-size:9px;line-height:10px;transform-origin:0 0;transform:scaleX(0.993);">S7M120</div>
<div class="t" style="left:450.95px;top:505.08px;transform-origin:0 0;transform:scaleX(1.000)">300 Ft<span style="font-size:5px;position:relative;top:-3.5px;">2</span> Filters</div>
<div class="t" style="left:534.15px;top:493.68px;font-size:9px;line-height:10px;transform-origin:0 0;transform:scaleX(0.993);">S7M400</div>
<div class="t" style="left:523.15px;top:505.08px;transform-origin:0 0;transform:scaleX(1.000)">400 Ft<span style="font-size:5px;position:relative;top:-3.5px;">2</span> Filters</div>
<div class="t" style="left:606.65px;top:493.68px;font-size:9px;line-height:10px;transform-origin:0 0;transform:scaleX(0.993);">S8M150</div>
<div class="t" style="left:595.65px;top:505.08px;transform-origin:0 0;transform:scaleX(1.000)">450 Ft<span style="font-size:5px;position:relative;top:-3.5px;">2</span> Filters</div>
<div class="t" style="left:677.75px;top:493.68px;font-size:9px;line-height:10px;transform-origin:0 0;transform:scaleX(0.993);">S8M500</div>
<div class="t" style="left:666.75px;top:505.08px;transform-origin:0 0;transform:scaleX(1.000)">500 Ft<span style="font-size:5px;position:relative;top:-3.5px;">2</span> Filters</div>
<div class="t" style="left:219.79px;top:521.18px;font-size:9px;line-height:10px;transform-origin:0 0;">1</div>
<div class="t" style="left:265.10px;top:521.18px;font-size:9px;line-height:10px;transform-origin:0 0;transform:scaleX(1.012);">2 Inch Gauge</div>
<div class="t" style="left:411.09px;top:521.18px;font-size:9px;line-height:10px;transform-origin:0 0;">1</div>
<div class="t" style="left:445.70px;top:521.18px;font-size:9px;line-height:10px;transform-origin:0 0;transform:scaleX(1.013);">33600-0023T</div>
<div class="t" style="left:514.80px;top:521.18px;font-size:9px;line-height:10px;transform-origin:0 0;transform:scaleX(1.013);">33600-0023T</div>
<div class="t" style="left:587.70px;top:521.18px;font-size:9px;line-height:10px;transform-origin:0 0;transform:scaleX(1.013);">33600-0023T</div>
<div class="t" style="left:659.40px;top:521.18px;font-size:9px;line-height:10px;transform-origin:0 0;transform:scaleX(1.013);">33600-0023T</div>
<div class="t" style="left:219.79px;top:531.32px;font-size:9px;line-height:10px;transform-origin:0 0;">2</div>
<div class="t" style="left:265.10px;top:531.32px;font-size:9px;line-height:10px;transform-origin:0 0;transform:scaleX(1.012);">Air Release Valve</div>
<div class="t" style="left:411.09px;top:531.32px;font-size:9px;line-height:10px;transform-origin:0 0;">1</div>
<div class="t" style="left:445.70px;top:531.32px;font-size:9px;line-height:10px;transform-origin:0 0;transform:scaleX(1.013);">WC212-120P</div>
<div class="t" style="left:514.80px;top:531.32px;font-size:9px;line-height:10px;transform-origin:0 0;transform:scaleX(1.013);">WC212-120P</div>
<div class="t" style="left:587.70px;top:531.32px;font-size:9px;line-height:10px;transform-origin:0 0;transform:scaleX(1.013);">WC212-120P</div>
<div class="t" style="left:659.40px;top:531.32px;font-size:9px;line-height:10px;transform-origin:0 0;transform:scaleX(1.013);">WC212-120P</div>
<div class="t" style="left:219.79px;top:541.46px;font-size:9px;line-height:10px;transform-origin:0 0;">3</div>
<div class="t" style="left:265.10px;top:541.46px;font-size:9px;line-height:10px;transform-origin:0 0;transform:scaleX(1.012);">Close Nipple 1/4 In.</div>
<div class="t" style="left:411.09px;top:541.46px;font-size:9px;line-height:10px;transform-origin:0 0;">1</div>
<div class="t" style="left:445.70px;top:541.46px;font-size:9px;line-height:10px;transform-origin:0 0;transform:scaleX(1.013);">35202-0959</div>
<div class="t" style="left:514.80px;top:541.46px;font-size:9px;line-height:10px;transform-origin:0 0;transform:scaleX(1.013);">35202-0959</div>
<div class="t" style="left:587.70px;top:541.46px;font-size:9px;line-height:10px;transform-origin:0 0;transform:scaleX(1.013);">35202-0959</div>
<div class="t" style="left:659.40px;top:541.46px;font-size:9px;line-height:10px;transform-origin:0 0;transform:scaleX(1.013);">35202-0959</div>
<div class="t" style="left:219.79px;top:551.60px;font-size:9px;line-height:10px;transform-origin:0 0;">4</div>
<div class="t" style="left:265.10px;top:551.60px;font-size:9px;line-height:10px;transform-origin:0 0;transform:scaleX(1.012);">Adapter Bushing</div>
<div class="t" style="left:411.09px;top:551.60px;font-size:9px;line-height:10px;transform-origin:0 0;">1</div>
<div class="t" style="left:445.70px;top:551.60px;font-size:9px;line-height:10px;transform-origin:0 0;transform:scaleX(1.013);">24900-0504</div>
<div class="t" style="left:514.80px;top:551.60px;font-size:9px;line-height:10px;transform-origin:0 0;transform:scaleX(1.013);">24900-0504</div>
<div class="t" style="left:587.70px;top:551.60px;font-size:9px;line-height:10px;transform-origin:0 0;transform:scaleX(1.013);">24900-0504</div>
<div class="t" style="left:659.40px;top:551.60px;font-size:9px;line-height:10px;transform-origin:0 0;transform:scaleX(1.013);">24900-0504</div>
<div class="t" style="left:219.79px;top:561.74px;font-size:9px;line-height:10px;transform-origin:0 0;">5</div>
<div class="t" style="left:265.10px;top:561.74px;font-size:9px;line-height:10px;transform-origin:0 0;transform:scaleX(1.012);">O-Ring</div>
<div class="t" style="left:411.09px;top:561.74px;font-size:9px;line-height:10px;transform-origin:0 0;">1</div>
<div class="t" style="left:445.70px;top:561.74px;font-size:9px;line-height:10px;transform-origin:0 0;transform:scaleX(1.013);">35505-1423</div>
<div class="t" style="left:514.80px;top:561.74px;font-size:9px;line-height:10px;transform-origin:0 0;transform:scaleX(1.013);">35505-1423</div>
<div class="t" style="left:587.70px;top:561.74px;font-size:9px;line-height:10px;transform-origin:0 0;transform:scaleX(1.013);">35505-1423</div>
<div class="t" style="left:659.40px;top:561.74px;font-size:9px;line-height:10px;transform-origin:0 0;transform:scaleX(1.013);">35505-1423</div>
<div class="t" style="left:219.79px;top:571.88px;font-size:9px;line-height:10px;transform-origin:0 0;">6</div>
<div class="t" style="left:265.10px;top:571.88px;font-size:9px;line-height:10px;transform-origin:0 0;transform:scaleX(1.012);">Large Cartridge</div>
<div class="t" style="left:411.09px;top:571.88px;font-size:9px;line-height:10px;transform-origin:0 0;">1</div>
<div class="t" style="left:445.70px;top:571.88px;font-size:9px;line-height:10px;transform-origin:0 0;transform:scaleX(1.013);">25022-0201S</div>
<div class="t" style="left:514.80px;top:571.88px;font-size:9px;line-height:10px;transform-origin:0 0;transform:scaleX(1.013);">25022-0224S</div>
<div class="t" style="left:587.70px;top:571.88px;font-size:9px;line-height:10px;transform-origin:0 0;transform:scaleX(1.013);">25022-0203S</div>
<div class="t" style="left:659.40px;top:571.88px;font-size:9px;line-height:10px;transform-origin:0 0;transform:scaleX(1.013);">25022-0225S</div>
<div class="t" style="left:219.79px;top:582.02px;font-size:9px;line-height:10px;transform-origin:0 0;">7</div>
<div class="t" style="left:265.10px;top:582.02px;font-size:9px;line-height:10px;transform-origin:0 0;transform:scaleX(1.012);">Small Cartridge</div>
<div class="t" style="left:411.09px;top:582.02px;font-size:9px;line-height:10px;transform-origin:0 0;">1</div>
<div class="t" style="left:445.70px;top:582.02px;font-size:9px;line-height:10px;transform-origin:0 0;transform:scaleX(1.013);">25021-0200S</div>
<div class="t" style="left:514.80px;top:582.02px;font-size:9px;line-height:10px;transform-origin:0 0;transform:scaleX(1.013);">25021-0223S</div>
<div class="t" style="left:587.70px;top:582.02px;font-size:9px;line-height:10px;transform-origin:0 0;transform:scaleX(1.013);">25021-0202S</div>
<div class="t" style="left:659.40px;top:582.02px;font-size:9px;line-height:10px;transform-origin:0 0;transform:scaleX(1.013);">25021-0224S</div>
<div class="t" style="left:219.79px;top:592.16px;font-size:9px;line-height:10px;transform-origin:0 0;">8</div>
<div class="t" style="left:265.10px;top:592.16px;font-size:9px;line-height:10px;transform-origin:0 0;transform:scaleX(1.012);">Air Bleed Filter</div>
<div class="t" style="left:411.09px;top:592.16px;font-size:9px;line-height:10px;transform-origin:0 0;">1</div>
<div class="t" style="left:445.70px;top:592.16px;font-size:9px;line-height:10px;transform-origin:0 0;transform:scaleX(1.013);">25021-0004</div>
<div class="t" style="left:514.80px;top:592.16px;font-size:9px;line-height:10px;transform-origin:0 0;transform:scaleX(1.013);">25021-0004</div>
<div class="t" style="left:587.70px;top:592.16px;font-size:9px;line-height:10px;transform-origin:0 0;transform:scaleX(1.013);">25021-0004</div>
<div class="t" style="left:659.40px;top:592.16px;font-size:9px;line-height:10px;transform-origin:0 0;transform:scaleX(1.013);">25021-0004</div>
<div class="t" style="left:219.79px;top:602.30px;font-size:9px;line-height:10px;transform-origin:0 0;">9</div>
<div class="t" style="left:265.10px;top:602.30px;font-size:9px;line-height:10px;transform-origin:0 0;transform:scaleX(1.012);">Air Bleed Tube</div>
<div class="t" style="left:411.09px;top:602.30px;font-size:9px;line-height:10px;transform-origin:0 0;">1</div>
<div class="t" style="left:445.70px;top:602.30px;font-size:9px;line-height:10px;transform-origin:0 0;transform:scaleX(1.013);">25021-0003</div>
<div class="t" style="left:514.80px;top:602.30px;font-size:9px;line-height:10px;transform-origin:0 0;transform:scaleX(1.013);">25021-0003</div>
<div class="t" style="left:587.70px;top:602.30px;font-size:9px;line-height:10px;transform-origin:0 0;transform:scaleX(1.013);">25021-0003</div>
<div class="t" style="left:659.40px;top:602.30px;font-size:9px;line-height:10px;transform-origin:0 0;transform:scaleX(1.013);">25021-0003</div>
<div class="t" style="left:217.29px;top:612.44px;font-size:9px;line-height:10px;transform-origin:0 0;">10</div>
<div class="t" style="left:265.10px;top:612.44px;font-size:9px;line-height:10px;transform-origin:0 0;transform:scaleX(1.012);">Baffle and Bulkhead Fitting</div>
<div class="t" style="left:411.09px;top:612.44px;font-size:9px;line-height:10px;transform-origin:0 0;">1</div>
<div class="t" style="left:445.70px;top:612.44px;font-size:9px;line-height:10px;transform-origin:0 0;transform:scaleX(1.013);">25021-0101</div>
<div class="t" style="left:514.80px;top:612.44px;font-size:9px;line-height:10px;transform-origin:0 0;transform:scaleX(1.013);">25021-0101</div>
<div class="t" style="left:587.70px;top:612.44px;font-size:9px;line-height:10px;transform-origin:0 0;transform:scaleX(1.013);">25021-0101</div>
<div class="t" style="left:659.40px;top:612.44px;font-size:9px;line-height:10px;transform-origin:0 0;transform:scaleX(1.013);">25021-0101</div>
<div class="t" style="left:217.63px;top:622.58px;font-size:9px;line-height:10px;transform-origin:0 0;">11</div>
<div class="t" style="left:265.10px;top:622.58px;font-size:9px;line-height:10px;transform-origin:0 0;transform:scaleX(1.012);">O-Ring</div>
<div class="t" style="left:411.09px;top:622.58px;font-size:9px;line-height:10px;transform-origin:0 0;">1</div>
<div class="t" style="left:445.70px;top:622.58px;font-size:9px;line-height:10px;transform-origin:0 0;transform:scaleX(1.013);">35505-1428</div>
<div class="t" style="left:514.80px;top:622.58px;font-size:9px;line-height:10px;transform-origin:0 0;transform:scaleX(1.013);">35505-1428</div>
<div class="t" style="left:587.70px;top:622.58px;font-size:9px;line-height:10px;transform-origin:0 0;transform:scaleX(1.013);">35505-1428</div>
<div class="t" style="left:659.40px;top:622.58px;font-size:9px;line-height:10px;transform-origin:0 0;transform:scaleX(1.013);">35505-1428</div>
<div class="t" style="left:217.29px;top:632.72px;font-size:9px;line-height:10px;transform-origin:0 0;">12</div>
<div class="t" style="left:265.10px;top:632.72px;font-size:9px;line-height:10px;transform-origin:0 0;transform:scaleX(1.012);">O-Ring</div>
<div class="t" style="left:411.09px;top:632.72px;font-size:9px;line-height:10px;transform-origin:0 0;">1</div>
<div class="t" style="left:445.70px;top:632.72px;font-size:9px;line-height:10px;transform-origin:0 0;transform:scaleX(1.013);">35505-1429</div>
<div class="t" style="left:514.80px;top:632.72px;font-size:9px;line-height:10px;transform-origin:0 0;transform:scaleX(1.013);">35505-1429</div>
<div class="t" style="left:587.70px;top:632.72px;font-size:9px;line-height:10px;transform-origin:0 0;transform:scaleX(1.013);">35505-1429</div>
<div class="t" style="left:659.40px;top:632.72px;font-size:9px;line-height:10px;transform-origin:0 0;transform:scaleX(1.013);">35505-1429</div>
<div class="t" style="left:217.29px;top:642.86px;font-size:9px;line-height:10px;transform-origin:0 0;">13</div>
<div class="t" style="left:265.10px;top:642.86px;font-size:9px;line-height:10px;transform-origin:0 0;transform:scaleX(1.012);">Elbow and Bulkhead Assembly</div>
<div class="t" style="left:411.09px;top:642.86px;font-size:9px;line-height:10px;transform-origin:0 0;">1</div>
<div class="t" style="left:445.70px;top:642.86px;font-size:9px;line-height:10px;transform-origin:0 0;transform:scaleX(1.013);">25021-0100</div>
<div class="t" style="left:514.80px;top:642.86px;font-size:9px;line-height:10px;transform-origin:0 0;transform:scaleX(1.013);">25021-0100</div>
<div class="t" style="left:587.70px;top:642.86px;font-size:9px;line-height:10px;transform-origin:0 0;transform:scaleX(1.013);">25021-0100</div>
<div class="t" style="left:659.40px;top:642.86px;font-size:9px;line-height:10px;transform-origin:0 0;transform:scaleX(1.013);">25021-0100</div>
<div class="t" style="left:217.29px;top:653.00px;font-size:9px;line-height:10px;transform-origin:0 0;">14</div>
<div class="t" style="left:265.10px;top:653.00px;font-size:9px;line-height:10px;transform-origin:0 0;transform:scaleX(1.012);">O-Ring</div>
<div class="t" style="left:411.09px;top:653.00px;font-size:9px;line-height:10px;transform-origin:0 0;">2</div>
<div class="t" style="left:445.70px;top:653.00px;font-size:9px;line-height:10px;transform-origin:0 0;transform:scaleX(1.013);">35505-1425</div>
<div class="t" style="left:514.80px;top:653.00px;font-size:9px;line-height:10px;transform-origin:0 0;transform:scaleX(1.013);">35505-1425</div>
<div class="t" style="left:587.70px;top:653.00px;font-size:9px;line-height:10px;transform-origin:0 0;transform:scaleX(1.013);">35505-1425</div>
<div class="t" style="left:659.40px;top:653.00px;font-size:9px;line-height:10px;transform-origin:0 0;transform:scaleX(1.013);">35505-1425</div>
<div class="t" style="left:217.29px;top:663.14px;font-size:9px;line-height:10px;transform-origin:0 0;">15</div>
<div class="t" style="left:265.10px;top:663.14px;font-size:9px;line-height:10px;transform-origin:0 0;transform:scaleX(1.012);">O-Ring</div>
<div class="t" style="left:411.09px;top:663.14px;font-size:9px;line-height:10px;transform-origin:0 0;">2</div>
<div class="t" style="left:445.70px;top:663.14px;font-size:9px;line-height:10px;transform-origin:0 0;transform:scaleX(1.013);">35505-1424</div>
<div class="t" style="left:514.80px;top:663.14px;font-size:9px;line-height:10px;transform-origin:0 0;transform:scaleX(1.013);">35505-1424</div>
<div class="t" style="left:587.70px;top:663.14px;font-size:9px;line-height:10px;transform-origin:0 0;transform:scaleX(1.013);">35505-1424</div>
<div class="t" style="left:659.40px;top:663.14px;font-size:9px;line-height:10px;transform-origin:0 0;transform:scaleX(1.013);">35505-1424</div>
<div class="t" style="left:217.29px;top:673.28px;font-size:9px;line-height:10px;transform-origin:0 0;">16</div>
<div class="t" style="left:265.10px;top:673.28px;font-size:9px;line-height:10px;transform-origin:0 0;transform:scaleX(1.012);">Adapter Fitting</div>
<div class="t" style="left:411.09px;top:673.28px;font-size:9px;line-height:10px;transform-origin:0 0;">1</div>
<div class="t" style="left:445.70px;top:673.28px;font-size:9px;line-height:10px;transform-origin:0 0;transform:scaleX(1.013);">24900-0509</div>
<div class="t" style="left:514.80px;top:673.28px;font-size:9px;line-height:10px;transform-origin:0 0;transform:scaleX(1.013);">24900-0509</div>
<div class="t" style="left:587.70px;top:673.28px;font-size:9px;line-height:10px;transform-origin:0 0;transform:scaleX(1.013);">24900-0509</div>
<div class="t" style="left:659.40px;top:673.28px;font-size:9px;line-height:10px;transform-origin:0 0;transform:scaleX(1.013);">24900-0509</div>
<div class="t" style="left:217.29px;top:683.42px;font-size:9px;line-height:10px;transform-origin:0 0;">17</div>
<div class="t" style="left:265.10px;top:683.42px;font-size:9px;line-height:10px;transform-origin:0 0;transform:scaleX(1.012);">1-1/2" NPT Plug</div>
<div class="t" style="left:411.09px;top:683.42px;font-size:9px;line-height:10px;transform-origin:0 0;">1</div>
<div class="t" style="left:445.70px;top:683.42px;font-size:9px;line-height:10px;transform-origin:0 0;transform:scaleX(1.013);">27001-0022S</div>
<div class="t" style="left:514.80px;top:683.42px;font-size:9px;line-height:10px;transform-origin:0 0;transform:scaleX(1.013);">27001-0022S</div>
<div class="t" style="left:587.70px;top:683.42px;font-size:9px;line-height:10px;transform-origin:0 0;transform:scaleX(1.013);">27001-0022S</div>
<div class="t" style="left:659.40px;top:683.42px;font-size:9px;line-height:10px;transform-origin:0 0;transform:scaleX(1.013);">27001-0022S</div>
<div class="t" style="left:217.29px;top:693.56px;font-size:9px;line-height:10px;transform-origin:0 0;">18</div>
<div class="t" style="left:265.10px;top:693.56px;font-size:9px;line-height:10px;transform-origin:0 0;transform:scaleX(1.012);">Drain Plug</div>
<div class="t" style="left:411.09px;top:693.56px;font-size:9px;line-height:10px;transform-origin:0 0;">1</div>
<div class="t" style="left:445.70px;top:693.56px;font-size:9px;line-height:10px;transform-origin:0 0;transform:scaleX(1.013);">24900-0503</div>
<div class="t" style="left:514.80px;top:693.56px;font-size:9px;line-height:10px;transform-origin:0 0;transform:scaleX(1.013);">24900-0503</div>
<div class="t" style="left:587.70px;top:693.56px;font-size:9px;line-height:10px;transform-origin:0 0;transform:scaleX(1.013);">24900-0503</div>
<div class="t" style="left:659.40px;top:693.56px;font-size:9px;line-height:10px;transform-origin:0 0;transform:scaleX(1.013);">24900-0503</div>
<div class="t" style="left:217.29px;top:703.70px;font-size:9px;line-height:10px;transform-origin:0 0;">19</div>
<div class="t" style="left:265.10px;top:703.70px;font-size:9px;line-height:10px;transform-origin:0 0;transform:scaleX(1.012);">Bulkhead Retaining Nut</div>
<div class="t" style="left:411.09px;top:703.70px;font-size:9px;line-height:10px;transform-origin:0 0;">2</div>
<div class="t" style="left:445.70px;top:703.70px;font-size:9px;line-height:10px;transform-origin:0 0;transform:scaleX(1.013);">24752-0050</div>
<div class="t" style="left:514.80px;top:703.70px;font-size:9px;line-height:10px;transform-origin:0 0;transform:scaleX(1.013);">24752-0050</div>
<div class="t" style="left:587.70px;top:703.70px;font-size:9px;line-height:10px;transform-origin:0 0;transform:scaleX(1.013);">24752-0050</div>
<div class="t" style="left:659.40px;top:703.70px;font-size:9px;line-height:10px;transform-origin:0 0;transform:scaleX(1.013);">24752-0050</div>
<div class="t" style="left:217.29px;top:713.84px;font-size:9px;line-height:10px;transform-origin:0 0;">20</div>
<div class="t" style="left:265.10px;top:713.84px;font-size:9px;line-height:10px;transform-origin:0 0;transform:scaleX(1.012);">Clamp Assembly</div>
<div class="t" style="left:411.84px;top:713.84px;font-size:9px;line-height:10px;transform-origin:0 0;">*</div>
<div class="t" style="left:445.70px;top:713.84px;font-size:9px;line-height:10px;transform-origin:0 0;transform:scaleX(1.013);">24850-0200</div>
<div class="t" style="left:514.80px;top:713.84px;font-size:9px;line-height:10px;transform-origin:0 0;transform:scaleX(1.013);">24850-0200</div>
<div class="t" style="left:587.70px;top:713.84px;font-size:9px;line-height:10px;transform-origin:0 0;transform:scaleX(1.013);">24850-0200</div>
<div class="t" style="left:659.40px;top:713.84px;font-size:9px;line-height:10px;transform-origin:0 0;transform:scaleX(1.013);">24850-0200</div>
<div class="t" style="left:217.29px;top:723.98px;font-size:9px;line-height:10px;transform-origin:0 0;">21</div>
<div class="t" style="left:265.10px;top:723.98px;font-size:9px;line-height:10px;transform-origin:0 0;transform:scaleX(1.012);">Clamp Bolt</div>
<div class="t" style="left:411.84px;top:723.98px;font-size:9px;line-height:10px;transform-origin:0 0;">*</div>
<div class="t" style="left:445.70px;top:723.98px;font-size:9px;line-height:10px;transform-origin:0 0;transform:scaleX(1.013);">24850-0010</div>
<div class="t" style="left:514.80px;top:723.98px;font-size:9px;line-height:10px;transform-origin:0 0;transform:scaleX(1.013);">24850-0010</div>
<div class="t" style="left:587.70px;top:723.98px;font-size:9px;line-height:10px;transform-origin:0 0;transform:scaleX(1.013);">24850-0010</div>
<div class="t" style="left:659.40px;top:723.98px;font-size:9px;line-height:10px;transform-origin:0 0;transform:scaleX(1.013);">24850-0010</div>
<div class="t" style="left:217.29px;top:734.12px;font-size:9px;line-height:10px;transform-origin:0 0;">22</div>
<div class="t" style="left:265.10px;top:734.12px;font-size:9px;line-height:10px;transform-origin:0 0;transform:scaleX(1.012);">Lower Tank Half</div>
<div class="t" style="left:411.09px;top:734.12px;font-size:9px;line-height:10px;transform-origin:0 0;">1</div>
<div class="t" style="left:445.70px;top:734.12px;font-size:9px;line-height:10px;transform-origin:0 0;transform:scaleX(1.013);">24850-0102S</div>
<div class="t" style="left:514.80px;top:734.12px;font-size:9px;line-height:10px;transform-origin:0 0;transform:scaleX(1.013);">24851-0103S</div>
<div class="t" style="left:587.70px;top:734.12px;font-size:9px;line-height:10px;transform-origin:0 0;transform:scaleX(1.013);">24851-0103S</div>
<div class="t" style="left:659.40px;top:734.12px;font-size:9px;line-height:10px;transform-origin:0 0;transform:scaleX(1.013);">24851-0103S</div>
<div class="t" style="left:217.29px;top:744.26px;font-size:9px;line-height:10px;transform-origin:0 0;">23</div>
<div class="t" style="left:265.10px;top:744.26px;font-size:9px;line-height:10px;transform-origin:0 0;transform:scaleX(1.012);">Cord Ring</div>
<div class="t" style="left:411.09px;top:744.26px;font-size:9px;line-height:10px;transform-origin:0 0;">1</div>
<div class="t" style="left:445.70px;top:744.26px;font-size:9px;line-height:10px;transform-origin:0 0;transform:scaleX(1.013);">24850-0008</div>
<div class="t" style="left:514.80px;top:744.26px;font-size:9px;line-height:10px;transform-origin:0 0;transform:scaleX(1.013);">24850-0008</div>
<div class="t" style="left:587.70px;top:744.26px;font-size:9px;line-height:10px;transform-origin:0 0;transform:scaleX(1.013);">24850-0009</div>
<div class="t" style="left:659.40px;top:744.26px;font-size:9px;line-height:10px;transform-origin:0 0;transform:scaleX(1.013);">24850-0009</div>
<div class="t" style="left:217.29px;top:754.40px;font-size:9px;line-height:10px;transform-origin:0 0;">24</div>
<div class="t" style="left:265.10px;top:754.40px;font-size:9px;line-height:10px;transform-origin:0 0;transform:scaleX(1.012);">Upper Tank Half Kit***</div>
<div class="t" style="left:411.09px;top:754.40px;font-size:9px;line-height:10px;transform-origin:0 0;">1</div>
<div class="t" style="left:445.70px;top:754.40px;font-size:9px;line-height:10px;transform-origin:0 0;transform:scaleX(1.013);">24851-9000</div>
<div class="t" style="left:514.80px;top:754.40px;font-size:9px;line-height:10px;transform-origin:0 0;transform:scaleX(1.013);">24851-9000</div>
<div class="t" style="left:587.70px;top:754.40px;font-size:9px;line-height:10px;transform-origin:0 0;transform:scaleX(1.013);">24851-9001</div>
<div class="t" style="left:659.40px;top:754.40px;font-size:9px;line-height:10px;transform-origin:0 0;transform:scaleX(1.013);">24851-9001</div>
<div class="t" style="left:217.29px;top:764.54px;font-size:9px;line-height:10px;transform-origin:0 0;">25</div>
<div class="t" style="left:265.10px;top:764.54px;font-size:9px;line-height:10px;transform-origin:0 0;transform:scaleX(1.012);">Valve and Gauge Assembly</div>
<div class="t" style="left:276.00px;top:774.68px;font-size:9px;line-height:10px;transform-origin:0 0;transform:scaleX(1.012);">(Includes Key Nos. 1-5)</div>
<div class="t" style="left:411.09px;top:774.68px;font-size:9px;line-height:10px;transform-origin:0 0;">1</div>
<div class="t" style="left:445.70px;top:774.68px;font-size:9px;line-height:10px;transform-origin:0 0;transform:scaleX(1.013);">24850-0105</div>
<div class="t" style="left:514.80px;top:774.68px;font-size:9px;line-height:10px;transform-origin:0 0;transform:scaleX(1.013);">24850-0105</div>
<div class="t" style="left:587.70px;top:774.68px;font-size:9px;line-height:10px;transform-origin:0 0;transform:scaleX(1.013);">24850-0105</div>
<div class="t" style="left:659.40px;top:774.68px;font-size:9px;line-height:10px;transform-origin:0 0;transform:scaleX(1.013);">24850-0105</div>
<div class="t" style="left:218.79px;top:784.82px;font-size:9px;line-height:10px;transform-origin:0 0;">**</div>
<div class="t" style="left:265.10px;top:784.82px;font-size:9px;line-height:10px;transform-origin:0 0;transform:scaleX(1.012);">Model Plate</div>
<div class="t" style="left:411.09px;top:784.82px;font-size:9px;line-height:10px;transform-origin:0 0;">1</div>
<div class="t" style="left:445.70px;top:784.82px;font-size:9px;line-height:10px;transform-origin:0 0;transform:scaleX(1.013);">32155-4036</div>
<div class="t" style="left:514.80px;top:784.82px;font-size:9px;line-height:10px;transform-origin:0 0;transform:scaleX(1.013);">32155-4144</div>
<div class="t" style="left:587.70px;top:784.82px;font-size:9px;line-height:10px;transform-origin:0 0;transform:scaleX(1.013);">32155-4038</div>
<div class="t" style="left:659.40px;top:784.82px;font-size:9px;line-height:10px;transform-origin:0 0;transform:scaleX(1.013);">32155-4145</div>
<div class="t" style="left:217.04px;top:794.26px;font-size:9px;line-height:10px;transform-origin:0 0;">***</div>
<div class="t" style="left:265.10px;top:794.26px;font-size:9px;line-height:10px;transform-origin:0 0;transform:scaleX(1.012);">Instruction Label</div>
<div class="t" style="left:411.09px;top:794.26px;font-size:9px;line-height:10px;transform-origin:0 0;">1</div>
<div class="t" style="left:445.70px;top:794.26px;font-size:9px;line-height:10px;transform-origin:0 0;transform:scaleX(1.013);">32165-4037</div>
<div class="t" style="left:514.80px;top:794.26px;font-size:9px;line-height:10px;transform-origin:0 0;transform:scaleX(1.013);">32165-4037</div>
<div class="t" style="left:587.70px;top:794.26px;font-size:9px;line-height:10px;transform-origin:0 0;transform:scaleX(1.013);">32165-4039</div>
<div class="t" style="left:659.40px;top:794.26px;font-size:9px;line-height:10px;transform-origin:0 0;transform:scaleX(1.013);">32165-4039</div>
</div></div>
<div id="menu">
<div class="sep" style="top:28px"></div>
<div class="sep" style="top:154px"></div>
<div class="sep" style="top:232px"></div>
<div class="mi" style="top:1px"><span style="left:35.7px;transform:scaleX(0.939)">PDF/A</span></div>
<div class="mi" style="top:31px"><span style="left:35.4px;transform:scaleX(0.802)">TIFF</span></div>
<div class="mi" style="top:55px"><span style="left:34.6px;transform:scaleX(0.799)">JPEG</span></div>
<div class="mi" style="top:79px"><span style="left:35.7px;transform:scaleX(0.867)">PNG</span></div>
<div class="mi" style="top:103px"><span style="left:34.9px;transform:scaleX(0.836)">GIF</span></div>
<div class="mi" style="top:127px"><span style="left:35.7px;transform:scaleX(0.904)">BMP</span></div>
<div class="mi" style="top:157px"><span style="left:35.1px;transform:scaleX(1.018)">Text</span></div>
<div class="mi" style="top:181px"><span style="left:35.7px;transform:scaleX(0.803)">RTF</span></div>
<div class="mi" style="top:205px"><span style="left:35.7px;transform:scaleX(0.940)">HTML</span></div>
<div class="mi" style="top:235px"><span style="left:34.9px;transform:scaleX(1.020)">Word Document</span><div class="arr"></div></div>
<div class="mi hl" style="top:259px"><span style="left:35.5px;transform:scaleX(0.990)">Excel Workbook</span><div class="arr"></div></div>
<div class="mi" style="top:283px"><span style="left:35.5px;transform:scaleX(0.973)">PowerPoint Presentation</span><div class="arr"></div></div>
</div>
<div id="sub">
<div class="mi" style="top:1px;width:171px"><span style="left:35.3px;transform:scaleX(0.993)">Full Document</span></div>
<div class="mi hl" style="top:25px;width:171px"><span style="left:35.3px;transform:scaleX(0.962)">Page Region</span></div>
</div>
</body></html>
